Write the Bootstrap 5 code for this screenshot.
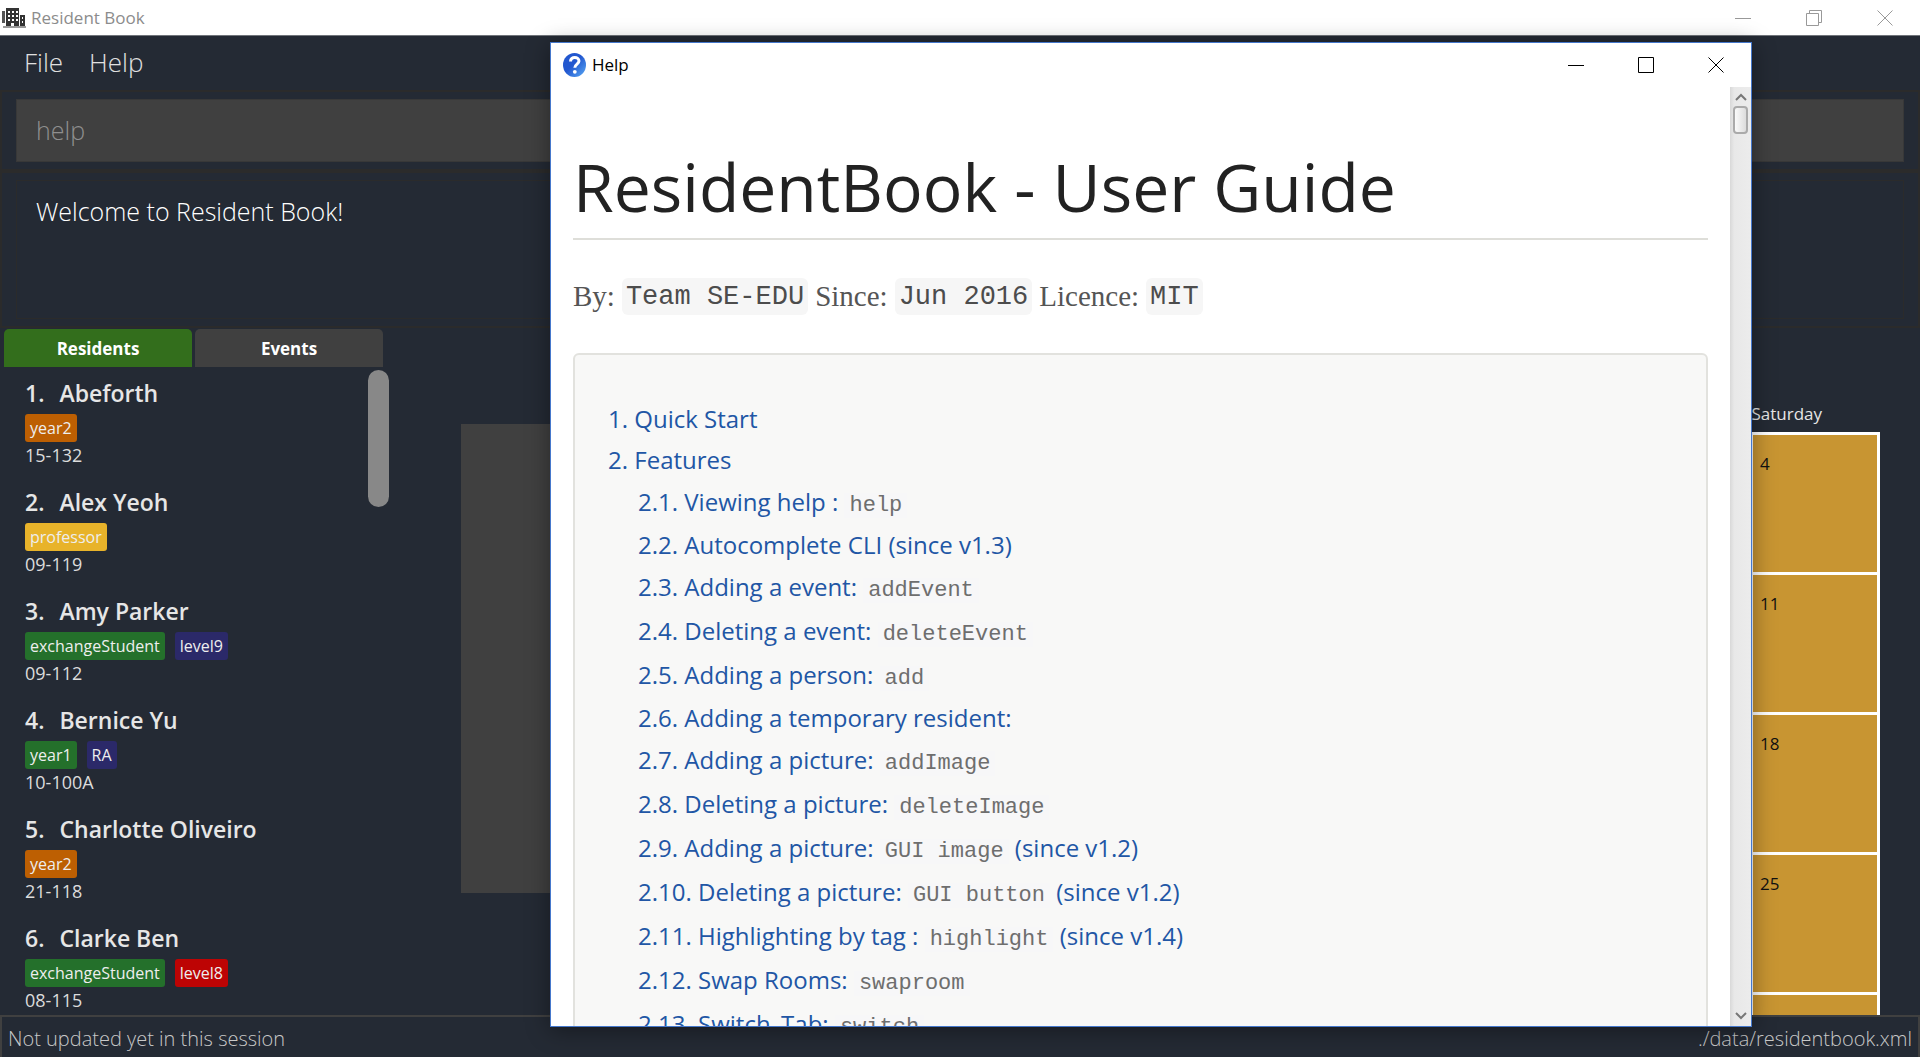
<!DOCTYPE html>
<html lang="en">
<head>
<meta charset="utf-8">
<meta name="viewport" content="width=device-width, initial-scale=1">
<title>Resident Book</title>
<link href="https://cdn.jsdelivr.net/npm/bootstrap@5.3.0/dist/css/bootstrap.min.css" rel="stylesheet">
<style>
  body { font-family: "Open Sans", "Noto Sans", sans-serif; background: #242a34; color: #e6e6e6; }
  .thin { font-weight: 300; }
  .app-title { height: 36px; background: #fff; color: #8c8c8c; border-bottom: 1px solid #70747a; font-size: 17px; padding-left: 2px; }
  .win-btn { border: 0; background: none; padding: 0; width: 70px; line-height: 0; color: #999; }
  .app-title .win-btn { width: 71px; }
  .win-btn svg { fill: none; stroke: currentColor; }
  .menu-row { height: 54px; padding: 0 24px 2px; gap: 26px; font-size: 26px; }
  .menu-row button { border: 0; background: none; padding: 0; color: #e0e0e0; }
  .pane { border: 2px solid #2b2b2b; }
  .cmd-pane { padding: 7px 14px; }
  .cmd-input { display: block; width: 100%; height: 63px; border: 1px solid #383838; background: #404040; color: #8f8f8f; padding: 0 19px 2px; font-size: 25px; font-weight: 300; }
  .result-pane { padding: 7px 14px; height: 157px; margin-bottom: 1px; }
  .result-box { height: 139px; border: 1px solid #2b2b2b; padding: 12px 19px; font-size: 25px; color: #fff; }
  .side { width: 389px; padding-left: 4px; }
  .side-tabs { gap: 3px; }
  .side-tabs button { width: 188px; height: 38px; border: 0; border-radius: 5px 5px 0 0; background: #404040; color: #fff; font-weight: 700; font-size: 17px; padding: 2px 0 0; }
  .side-tabs button.active { background: #336e1c; }
  .people { padding: 10px 0 0 21px; }
  .person { height: 109px; }
  .person h2 { font-size: 23px; line-height: 32px; font-weight: 600; margin: 0 0 5px; gap: 15px; }
  .person .room { font-size: 18px; line-height: 26px; color: #dcdcdc; }
  .tags { gap: 10px; }
  .tag { font-size: 16px; line-height: 28px; height: 28px; padding: 0 5px; border-radius: 3px; color: #eee; }
  .tag-orange { background: #bd5f02; } .tag-yellow { background: #e8b32a; } .tag-green { background: #24702b; }
  .tag-blue { background: #2b2969; } .tag-red { background: #bd0404; }
  .side-thumb { width: 21px; height: 137px; border-radius: 11px; background: #888; margin-top: 3px; }
  .detail { margin: 95px 0 0 72px; height: 469px; width: 400px; background: #404040; }
  .cal { width: 130px; margin: 74px 40px 0 auto; font-size: 17px; border-collapse: collapse; }
  .cal th { font-weight: 400; height: 29px; line-height: 22px; padding: 0 0 7px; vertical-align: bottom; }
  .cal td { height: 140px; background: #c89532; border: 3px solid #fff; color: #111; vertical-align: top; padding: 16px 7px 0; }
  .status { height: 42px; border: 2px solid #404040; border-bottom: 0; font-size: 20px; padding: 4px 6px 0; color: #c8c8c8; }
  .help-win { position: absolute; top: 42px; right: 168px; bottom: 30px; left: 550px; background: #fff; border: 1px solid #4578cc; box-shadow: 0 3px 22px rgba(0, 0, 0, .4); color: #000; }
  .help-title { height: 44px; padding-left: 12px; font-size: 17px; gap: 6px; }
  .help-title .win-btn { color: #000; }
  .guide { padding: 0 22px; overflow: hidden; }
  .guide h1 { font-size: 66px; line-height: 92px; margin: 53px 0 0; padding-bottom: 6px; border-bottom: 2px solid #deded9; color: #222; font-weight: 400; }
  .byline { font-family: "Liberation Serif", serif; font-size: 29px; line-height: 36px; margin: 38px 0; color: #555; gap: 7px; }
  .byline code { font-size: 27px; padding: 1px 4px 0; border-radius: 6px; background: #f6f6f6; color: #4c4c4c; }
  .guide code { font-family: "Liberation Mono", monospace; }
  .toc { border: 2px solid #e2e2de; border-radius: 6px; background: #f8f8f7; padding: 43px 33px 0; font-size: 24px; }
  .toc ul { list-style: none; padding: 0; margin: 0; }
  .toc ul ul { padding-left: 30px; }
  .toc li { line-height: 41px; }
  .toc li.with-code { line-height: 44px; }
  .toc a { color: #2156a5; text-decoration: none; }
  .toc code { font-size: 22px; line-height: 22px; color: #6e6e6e; background: #f7f7f8; padding: 0 5px; }
  .help-scroll { width: 21px; background: linear-gradient(90deg, #d8d8d8, #e8e8e8 20%, #ececec); padding: 6px 0; }
  .help-scroll svg { fill: none; stroke: #777; stroke-width: 2; }
  .help-thumb { width: 15px; height: 28px; border: 2px solid #aaa; border-radius: 4px; background: linear-gradient(90deg, #fafafa, #dcdcdc); margin-top: 5px; }
</style>
</head>
<body class="vh-100 d-flex flex-column overflow-hidden position-relative">
<header class="app-title d-flex align-items-center flex-shrink-0">
  <svg width="25" height="22" viewBox="0 0 25 22" aria-hidden="true"><path fill="#555" d="M0 4h3v12H0z"/><path fill="#333" d="M4 1h13v18H4zM18 8h5v11h-5z"/><path fill="#999" d="M1 19h23v2H1z"/><path fill="#fff" d="M6 4h2v2H6zm4 0h2v2h-2zm4 0h2v2h-2zM6 8h2v2H6zm4 0h2v2h-2zm4 0h2v2h-2zM6 12h2v2H6zm4 0h2v2h-2zm4 0h2v2h-2zM9 16h3v3H9zM20 10h1v2h-1zm0 4h1v2h-1z"/></svg>
  <span class="ms-1">Resident Book</span>
  <div class="d-flex ms-auto">
    <button class="win-btn" aria-label="Minimize"><svg width="16" height="16"><path d="M0 8.500h16"/></svg></button>
    <button class="win-btn" aria-label="Restore"><svg width="16" height="16"><path d="M.5 3.500h12v12H.5zM3.500 3V.5h12v12H13"/></svg></button>
    <button class="win-btn" aria-label="Close"><svg width="16" height="16"><path d="M.5.5l15 15M15.500.5l-15 15"/></svg></button>
  </div>
</header>
<nav class="menu-row d-flex align-items-center flex-shrink-0"><button class="thin">File</button><button class="thin">Help</button></nav>
<div class="pane cmd-pane flex-shrink-0"><input class="cmd-input" type="text" value="help" aria-label="Command"></div>
<div class="pane result-pane flex-shrink-0"><div class="result-box thin">Welcome to Resident Book!</div></div>
<main class="d-flex flex-grow-1 overflow-hidden">
  <section class="side flex-shrink-0 d-flex flex-column">
    <div class="side-tabs d-flex"><button class="active">Residents</button><button>Events</button></div>
    <div class="d-flex justify-content-between">
      <div class="people">
        <div class="person"><h2 class="d-flex"><span>1.</span><span>Abeforth</span></h2><div class="d-flex tags"><span class="tag tag-orange">year2</span></div><div class="room">15-132</div></div>
        <div class="person"><h2 class="d-flex"><span>2.</span><span>Alex Yeoh</span></h2><div class="d-flex tags"><span class="tag tag-yellow">professor</span></div><div class="room">09-119</div></div>
        <div class="person"><h2 class="d-flex"><span>3.</span><span>Amy Parker</span></h2><div class="d-flex tags"><span class="tag tag-green">exchangeStudent</span><span class="tag tag-blue">level9</span></div><div class="room">09-112</div></div>
        <div class="person"><h2 class="d-flex"><span>4.</span><span>Bernice Yu</span></h2><div class="d-flex tags"><span class="tag tag-green">year1</span><span class="tag tag-blue">RA</span></div><div class="room">10-100A</div></div>
        <div class="person"><h2 class="d-flex"><span>5.</span><span>Charlotte Oliveiro</span></h2><div class="d-flex tags"><span class="tag tag-orange">year2</span></div><div class="room">21-118</div></div>
        <div class="person"><h2 class="d-flex"><span>6.</span><span>Clarke Ben</span></h2><div class="d-flex tags"><span class="tag tag-green">exchangeStudent</span><span class="tag tag-red">level8</span></div><div class="room">08-115</div></div>
      </div>
      <div class="side-thumb"></div>
    </div>
  </section>
  <div class="detail flex-shrink-0"></div>
  <section class="ms-auto">
    <table class="cal"><thead><tr><th>Saturday</th></tr></thead><tbody><tr><td>4</td></tr><tr><td>11</td></tr><tr><td>18</td></tr><tr><td>25</td></tr><tr><td></td></tr></tbody></table>
  </section>
</main>
<footer class="status d-flex justify-content-between align-items-center flex-shrink-0 thin"><span>Not updated yet in this session</span><span>./data/residentbook.xml</span></footer>

<section class="help-win d-flex flex-column" role="dialog" aria-label="Help">
  <div class="help-title d-flex align-items-center flex-shrink-0">
    <svg width="23" height="24" viewBox="0 0 23 24" aria-hidden="true"><defs><linearGradient id="orb" x1="0" y1="0" x2="1" y2="1"><stop offset=".45" stop-color="#2257cf"/><stop offset="1" stop-color="#5aaaf5"/></linearGradient></defs><ellipse cx="11.500" cy="12" rx="11.500" ry="12" fill="url(#orb)"/><path d="M7.500 8.500c0-5.500 8.500-5 8.500-.5 0 3.200-4.200 3-4.200 6.800" fill="none" stroke="#fff" stroke-width="3"/><circle cx="11.800" cy="18.800" r="1.900" fill="#fff"/></svg>
    <span>Help</span>
    <div class="d-flex ms-auto">
      <button class="win-btn" aria-label="Minimize"><svg width="16" height="16"><path d="M0 8.500h16"/></svg></button>
      <button class="win-btn" aria-label="Maximize"><svg width="16" height="16"><path d="M.5.5h15v15H.5z"/></svg></button>
      <button class="win-btn" aria-label="Close"><svg width="16" height="16"><path d="M.5.5l15 15M15.500.5l-15 15"/></svg></button>
    </div>
  </div>
  <div class="d-flex flex-grow-1 overflow-hidden">
    <article class="guide flex-grow-1">
      <h1>ResidentBook - User Guide</h1>
      <div class="byline d-flex"><span>By:</span><code>Team SE-EDU</code><span>Since:</span><code>Jun 2016</code><span>Licence:</span><code>MIT</code></div>
      <nav class="toc">
        <ul>
          <li><a href="#s1">1. Quick Start</a></li>
          <li><a href="#s2">2. Features</a>
            <ul>
              <li class="with-code"><a href="#s2-1">2.1. Viewing help : <code>help</code></a></li>
              <li><a href="#s2-2">2.2. Autocomplete CLI (since v1.3)</a></li>
              <li class="with-code"><a href="#s2-3">2.3. Adding a event: <code>addEvent</code></a></li>
              <li class="with-code"><a href="#s2-4">2.4. Deleting a event: <code>deleteEvent</code></a></li>
              <li class="with-code"><a href="#s2-5">2.5. Adding a person: <code>add</code></a></li>
              <li><a href="#s2-6">2.6. Adding a temporary resident:</a></li>
              <li class="with-code"><a href="#s2-7">2.7. Adding a picture: <code>addImage</code></a></li>
              <li class="with-code"><a href="#s2-8">2.8. Deleting a picture: <code>deleteImage</code></a></li>
              <li class="with-code"><a href="#s2-9">2.9. Adding a picture: <code>GUI image</code> (since v1.2)</a></li>
              <li class="with-code"><a href="#s2-10">2.10. Deleting a picture: <code>GUI button</code> (since v1.2)</a></li>
              <li class="with-code"><a href="#s2-11">2.11. Highlighting by tag : <code>highlight</code> (since v1.4)</a></li>
              <li class="with-code"><a href="#s2-12">2.12. Swap Rooms: <code>swaproom</code></a></li>
              <li class="with-code"><a href="#s2-13">2.13. Switch_Tab: <code>switch</code></a></li>
            </ul>
          </li>
        </ul>
      </nav>
    </article>
    <div class="help-scroll d-flex flex-column align-items-center flex-shrink-0">
      <svg width="12" height="8"><path d="M1 7l5-5 5 5"/></svg>
      <div class="help-thumb"></div>
      <svg class="mt-auto" width="12" height="8"><path d="M1 1l5 5 5-5"/></svg>
    </div>
  </div>
</section>
<script src="https://cdn.jsdelivr.net/npm/bootstrap@5.3.0/dist/js/bootstrap.bundle.min.js"></script>
</body>
</html>
